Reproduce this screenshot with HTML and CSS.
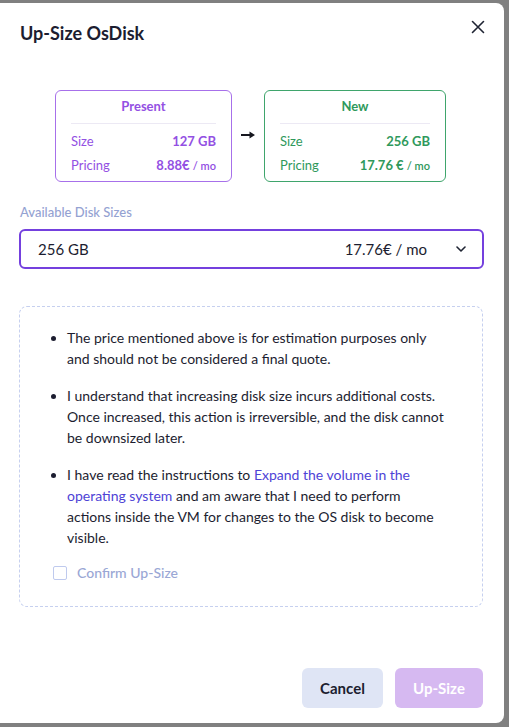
FILE: index.html
```html
<!DOCTYPE html>
<html lang="en">
<head>
  <meta charset="UTF-8">
  <title>Up-Size OsDisk</title>
  <link rel="stylesheet" href="styles.css">
</head>
<body>

<div class="modal">
  <div class="modal-header">
    <h2>Up-Size OsDisk</h2>
    <button class="close-btn" aria-label="Close">
      <svg width="14" height="14" viewBox="0 0 14 14">
        <path d="M1.5 1.5 L12.5 12.5 M12.5 1.5 L1.5 12.5" stroke="#1f2433" stroke-width="1.6" stroke-linecap="round"/>
      </svg>
    </button>
  </div>

  <div class="compare">
    <div class="size-card present">
      <div class="card-title">Present</div>
      <div class="card-row"><span>Size</span><b>127 GB</b></div>
      <div class="card-row"><span>Pricing</span><b>8.88€ <small>/ mo</small></b></div>
    </div>

    <div class="arrow">
      <svg width="14" height="8" viewBox="0 0 14 8">
        <path d="M0 2.9 H8.5 V0.5 L14 4 L8.5 7.5 V5.1 H0 Z" fill="#16171f"/>
      </svg>
    </div>

    <div class="size-card new">
      <div class="card-title">New</div>
      <div class="card-row"><span>Size</span><b>256 GB</b></div>
      <div class="card-row"><span>Pricing</span><b>17.76 € <small>/ mo</small></b></div>
    </div>
  </div>

  <label class="field-label">Available Disk Sizes</label>
  <div class="select">
    <span class="select-size">256 GB</span>
    <span class="select-price">17.76€ / mo</span>
    <svg width="10" height="6" viewBox="0 0 10 6">
      <path d="M1 1 L5 5 L9 1" fill="none" stroke="#1f2433" stroke-width="1.6" stroke-linecap="round" stroke-linejoin="round"/>
    </svg>
  </div>

  <div class="terms">
    <ul>
      <li>The price mentioned above is for estimation purposes only and should not be considered a final quote.</li>
      <li>I understand that increasing disk size incurs additional costs. Once increased, this action is irreversible, and the disk cannot be downsized later.</li>
      <li>I have read the instructions to <a href="#">Expand the volume in the operating system</a> and am aware that I need to perform actions inside the VM for changes to the OS disk to become visible.</li>
    </ul>
    <label class="confirm">
      <span class="checkbox"></span>
      Confirm Up-Size
    </label>
  </div>

  <div class="modal-footer">
    <button class="btn btn-cancel">Cancel</button>
    <button class="btn btn-primary" disabled>Up-Size</button>
  </div>
</div>

</body>
</html>
```

FILE: styles.css
```css
body {
  margin: 0;
  padding: 0;
  background: #808080;
  font-family: 'Lato', 'Liberation Sans', sans-serif;
  color: #1c1d30;
  overflow: hidden;
}

.modal {
  width: 504px;
  height: 720px;
  margin-top: 3px;
  padding: 0 20px 15px;
  box-sizing: border-box;
  background: #fff;
  border-radius: 0 8px 8px 0;
  display: flex;
  flex-direction: column;
}

.modal-header {
  display: flex;
  justify-content: space-between;
  align-items: flex-start;
  padding-top: 18px;
}

.modal-header h2 {
  margin: 0;
  font-size: 18px;
  line-height: 24px;
  font-weight: 700;
  color: #1c1d30;
}

.close-btn {
  border: 0;
  background: none;
  padding: 0;
  margin: -1px -1px 0 0;
  width: 14px;
  height: 14px;
  cursor: pointer;
}

.close-btn svg {
  display: block;
}

.compare {
  display: flex;
  align-items: center;
  margin: 45px 0 0 35px;
}

.size-card {
  border: 1px solid;
  border-radius: 6px;
  padding: 6px 15px 6px;
  box-sizing: border-box;
  height: 92px;
}

.size-card.present {
  width: 177px;
  border-color: #a770ea;
  color: #9350e3;
}

.size-card.new {
  width: 182px;
  border-color: #3fa56c;
  color: #2f995c;
}

.card-title {
  text-align: center;
  font-weight: 700;
  font-size: 13px;
  line-height: 18px;
  padding-bottom: 8px;
  border-bottom: 1px solid #ece9f4;
  margin-bottom: 7px;
}

.card-row {
  display: flex;
  justify-content: space-between;
  font-size: 13px;
  line-height: 20px;
  margin-bottom: 4px;
}

.card-row b {
  font-weight: 700;
}

.card-row small {
  font-size: 11px;
  font-weight: 600;
}

.arrow {
  width: 32px;
  display: flex;
  justify-content: center;
  padding: 0 1px 2px 0;
  box-sizing: border-box;
}

.field-label {
  display: block;
  margin-top: 21px;
  font-size: 13px;
  line-height: 18px;
  font-weight: 500;
  color: #94a2d2;
}

.select {
  display: flex;
  align-items: center;
  height: 40px;
  box-sizing: border-box;
  margin: 8px 0 0 -1px;
  padding: 0 16px 0 17px;
  border: 2px solid #7440de;
  border-radius: 6px;
  font-size: 15px;
  color: #1c1d30;
}

.select-size {
  flex: 1;
}

.select-price {
  margin-right: 29px;
}

.terms {
  margin: 37px 0 0 -1px;
  width: 464px;
  box-sizing: border-box;
  height: 301px;
  border: 1px dashed #c6d0ef;
  border-radius: 8px;
  padding: 20px 37px 0 33px;
}

.terms ul {
  margin: 0;
  padding-left: 14px;
  font-size: 14px;
  line-height: 21px;
  color: #1c1d30;
}

.terms li {
  margin-bottom: 16px;
}

.terms li:last-child {
  margin-bottom: 0;
}

.terms a {
  color: #4e43d6;
  text-decoration: none;
}

.confirm {
  display: flex;
  align-items: center;
  margin-top: 15px;
  font-size: 14px;
  line-height: 20px;
  font-weight: 500;
  color: #9aa7d5;
}

.checkbox {
  width: 12px;
  height: 12px;
  border: 1.5px solid #bfcaee;
  border-radius: 2px;
  margin-right: 10px;
}

.modal-footer {
  margin-top: auto;
  display: flex;
  justify-content: flex-end;
  gap: 12px;
}

.btn {
  height: 40px;
  border: 0;
  border-radius: 6px;
  font-family: inherit;
  font-size: 15px;
  font-weight: 700;
  padding: 0 16px;
}

.btn-cancel {
  width: 81px;
  background: #dfe5f5;
  color: #1c1d30;
}

.btn-primary {
  width: 88px;
  background: #d6b9f1;
  color: #fff;
  margin-right: 1px;
}
```
